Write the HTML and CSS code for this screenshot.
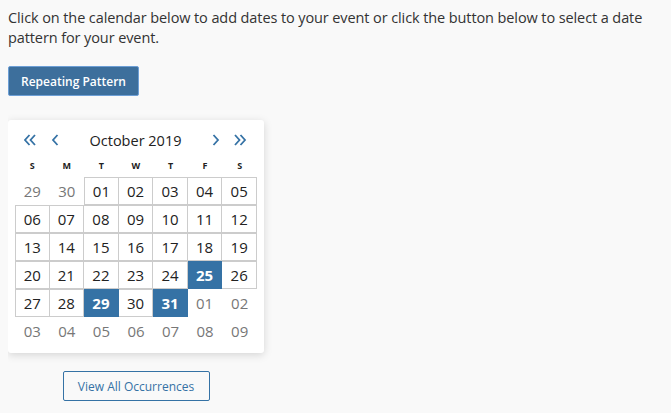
FILE: index.html
```html
<!DOCTYPE html>
<html lang="en">
<head>
  <meta charset="UTF-8">
  <title>Event Dates</title>
  <link rel="stylesheet" href="styles.css">
</head>
<body>

<p class="intro">Click on the calendar below to add dates to your event or click the button below to select a date pattern for your event.</p>

<button class="btn-primary">Repeating Pattern</button>

<div class="picker">
  <div class="calendar">
    <div class="cal-head">
      <span class="nav nav-double">
        <svg width="12" height="12" viewBox="0 0 12 12"><path d="M5.5 1 L1 6 L5.5 11 M11 1 L6.5 6 L11 11" /></svg>
      </span>
      <span class="nav nav-single">
        <svg width="8" height="12" viewBox="0 0 8 12"><path d="M6.5 1 L2 6 L6.5 11" /></svg>
      </span>
      <span class="month">October 2019</span>
      <span class="nav nav-single">
        <svg width="8" height="12" viewBox="0 0 8 12"><path d="M1.5 1 L6 6 L1.5 11" /></svg>
      </span>
      <span class="nav nav-double">
        <svg width="13" height="12" viewBox="0 0 13 12"><path d="M1 1 L5.5 6 L1 11 M6.5 1 L11 6 L6.5 11" /></svg>
      </span>
    </div>

    <table class="days">
      <thead>
        <tr><th>S</th><th>M</th><th>T</th><th>W</th><th>T</th><th>F</th><th>S</th></tr>
      </thead>
      <tbody>
        <tr><td class="other">29</td><td class="other">30</td><td>01</td><td>02</td><td>03</td><td>04</td><td>05</td></tr>
        <tr><td>06</td><td>07</td><td>08</td><td>09</td><td>10</td><td>11</td><td>12</td></tr>
        <tr><td>13</td><td>14</td><td>15</td><td>16</td><td>17</td><td>18</td><td>19</td></tr>
        <tr><td>20</td><td>21</td><td>22</td><td>23</td><td>24</td><td class="selected">25</td><td>26</td></tr>
        <tr><td>27</td><td>28</td><td class="selected">29</td><td>30</td><td class="selected">31</td><td class="other">01</td><td class="other">02</td></tr>
        <tr><td class="other">03</td><td class="other">04</td><td class="other">05</td><td class="other">06</td><td class="other">07</td><td class="other">08</td><td class="other">09</td></tr>
      </tbody>
    </table>
  </div>

  <button class="btn-outline">View All Occurrences</button>
</div>

</body>
</html>
```

FILE: styles.css
```css
body {
  margin: 8px;
  background-color: #f9f9f9;
  font-family: "Open Sans", Arial, sans-serif;
  color: #333;
}

.intro {
  margin: 0;
  font-size: 14.5px;
  line-height: 20px;
  letter-spacing: -0.1px;
}

.btn-primary {
  display: block;
  margin-top: 18px;
  height: 30px;
  width: 131px;
  padding: 0;
  background: #3d6f9c;
  border: 1px solid #6d9fd6;
  border-radius: 2px;
  color: white;
  font-family: inherit;
  font-size: 12px;
  font-weight: 600;
}

.picker {
  width: 256px;
  margin-top: 24px;
  display: flex;
  flex-direction: column;
  align-items: center;
}

.calendar {
  width: 256px;
  box-sizing: border-box;
  background: white;
  border-radius: 3px;
  box-shadow: 0 2px 8px rgba(0, 0, 0, 0.15);
  padding: 6px 7px 8px 7px;
}

.cal-head {
  display: flex;
  align-items: center;
  height: 28px;
  padding: 0 10px 0 9px;
}

.nav {
  display: flex;
}

.nav-double + .nav-single {
  margin-left: 15px;
}

.nav-single + .nav-double {
  margin-left: 14px;
}

.nav svg path {
  fill: none;
  stroke: #3572a5;
  stroke-width: 1.8;
}

.month {
  flex: 1;
  text-align: center;
  font-size: 14.5px;
  color: #222;
}

.days {
  width: 242px;
  table-layout: fixed;
  border-collapse: separate;
  border-spacing: 0;
  text-align: center;
}

.days th {
  height: 23px;
  padding: 0;
  font-size: 9px;
  font-weight: 700;
  color: #222;
}

.days td {
  height: 26px;
  padding: 0;
  font-size: 15px;
  color: #222;
  border: 1px solid #ccc;
  border-left-width: 0;
}

.days td:first-child,
.days td.other + td {
  border-left-width: 1px;
}

.days td.other {
  border-color: transparent;
  color: #777;
}

.days td.selected {
  background: #3572a5;
  border-color: #3572a5;
  color: white;
  font-weight: 700;
}

.btn-outline {
  margin-top: 18px;
  height: 30px;
  width: 147px;
  padding: 0;
  background: transparent;
  border: 1px solid #3572a5;
  border-radius: 2px;
  color: #3572a5;
  font-family: inherit;
  font-size: 12px;
}
```
